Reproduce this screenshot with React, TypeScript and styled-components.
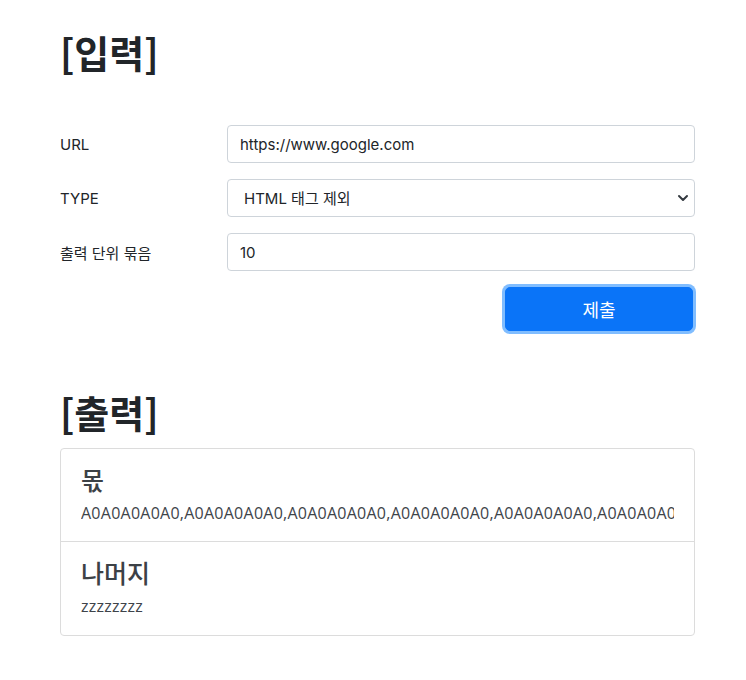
import React from "react";
import styled, { createGlobalStyle } from "styled-components";

const Global = createGlobalStyle`
  html, body { margin: 0; padding: 0; background: #fff; }
  body {
    font-family: Inter, "Noto Sans CJK KR", sans-serif;
    color: #212529;
  }
  * { box-sizing: border-box; }
`;

const Page = styled.div`
  width: 635px;
  margin-left: 60px;
  padding-top: 28px;
`;

const Heading = styled.h1<{ $mt?: number }>`
  margin: ${(p) => p.$mt ?? 0}px 0 0 0;
  font-family: "Noto Sans CJK KR", sans-serif;
  font-size: 38px;
  font-weight: 700;
  line-height: 48px;
  color: #212529;
`;

const Form = styled.form`
  margin-top: 49px;
  display: flex;
  flex-direction: column;
  gap: 16px;
`;

const Row = styled.div`
  display: grid;
  grid-template-columns: 167px 1fr;
  align-items: center;
`;

const Label = styled.label`
  font-family: Inter, "Noto Sans CJK KR", sans-serif;
  font-size: 15px;
  color: #212529;
`;

const Input = styled.input`
  height: 38px;
  width: 100%;
  border: 1px solid #ced4da;
  border-radius: 4px;
  padding: 0 12px;
  font-family: Inter, "Noto Sans CJK KR", sans-serif;
  font-size: 15px;
  color: #212529;
  background: #fff;
`;

const SelectWrap = styled.div`
  position: relative;
  height: 38px;
`;

const Select = styled.select`
  appearance: none;
  height: 38px;
  width: 100%;
  border: 1px solid #ced4da;
  border-radius: 4px;
  padding: 0 12px 0 16px;
  font-family: Inter, "Noto Sans CJK KR", sans-serif;
  font-size: 15px;
  color: #212529;
  background: #fff;
`;

const Caret = styled.svg`
  position: absolute;
  right: 4px;
  top: 14px;
  pointer-events: none;
`;

const ButtonRow = styled.div`
  display: flex;
  justify-content: flex-end;
`;

const Submit = styled.button`
  width: 188px;
  height: 44px;
  margin-right: 2px;
  border: 1px solid #0a74f8;
  border-radius: 5px;
  background: #0a74f8;
  color: #fff;
  font-family: "Noto Sans CJK KR", sans-serif;
  font-size: 18px;
  box-shadow: 0 0 0 3px #80bdff;
`;

const List = styled.div`
  margin-top: 12px;
  border: 1px solid #dcdcdc;
  border-radius: 4px;
`;

const Item = styled.div<{ $last?: boolean }>`
  height: 93px;
  padding: 14px 20px 0 20px;
  border-bottom: ${(p) => (p.$last ? "none" : "1px solid #dcdcdc")};
  overflow: hidden;
`;

const ItemTitle = styled.div`
  font-family: "Noto Sans CJK KR", sans-serif;
  font-size: 25px;
  font-weight: 500;
  line-height: 32px;
  color: #3c4146;
`;

const ItemText = styled.div`
  margin-top: 6px;
  font-family: "Open Sans", sans-serif;
  font-size: 16px;
  line-height: 24px;
  letter-spacing: 0.25px;
  color: #3e444a;
  white-space: nowrap;
  overflow: hidden;
`;

const quotient = Array(8).fill("A0A0A0A0A0").join(",");

export default function App() {
  return (
    <>
      <Global />
      <Page>
        <Heading>[입력]</Heading>
        <Form onSubmit={(e) => e.preventDefault()}>
          <Row>
            <Label>URL</Label>
            <Input defaultValue="https://www.google.com" />
          </Row>
          <Row>
            <Label>TYPE</Label>
            <SelectWrap>
              <Select defaultValue="html">
                <option value="html">HTML 태그 제외</option>
              </Select>
              <Caret width="16" height="10" viewBox="0 0 16 10">
                <path d="M4 3l4 4 4-4" fill="none" stroke="#343a40" strokeWidth="2" strokeLinecap="round" strokeLinejoin="round" />
              </Caret>
            </SelectWrap>
          </Row>
          <Row>
            <Label>출력 단위 묶음</Label>
            <Input defaultValue="10" />
          </Row>
          <ButtonRow>
            <Submit type="submit">제출</Submit>
          </ButtonRow>
        </Form>
        <Heading $mt={57}>[출력]</Heading>
        <List>
          <Item>
            <ItemTitle>몫</ItemTitle>
            <ItemText>{quotient}</ItemText>
          </Item>
          <Item $last>
            <ItemTitle>나머지</ItemTitle>
            <ItemText>zzzzzzzz</ItemText>
          </Item>
        </List>
      </Page>
    </>
  );
}
